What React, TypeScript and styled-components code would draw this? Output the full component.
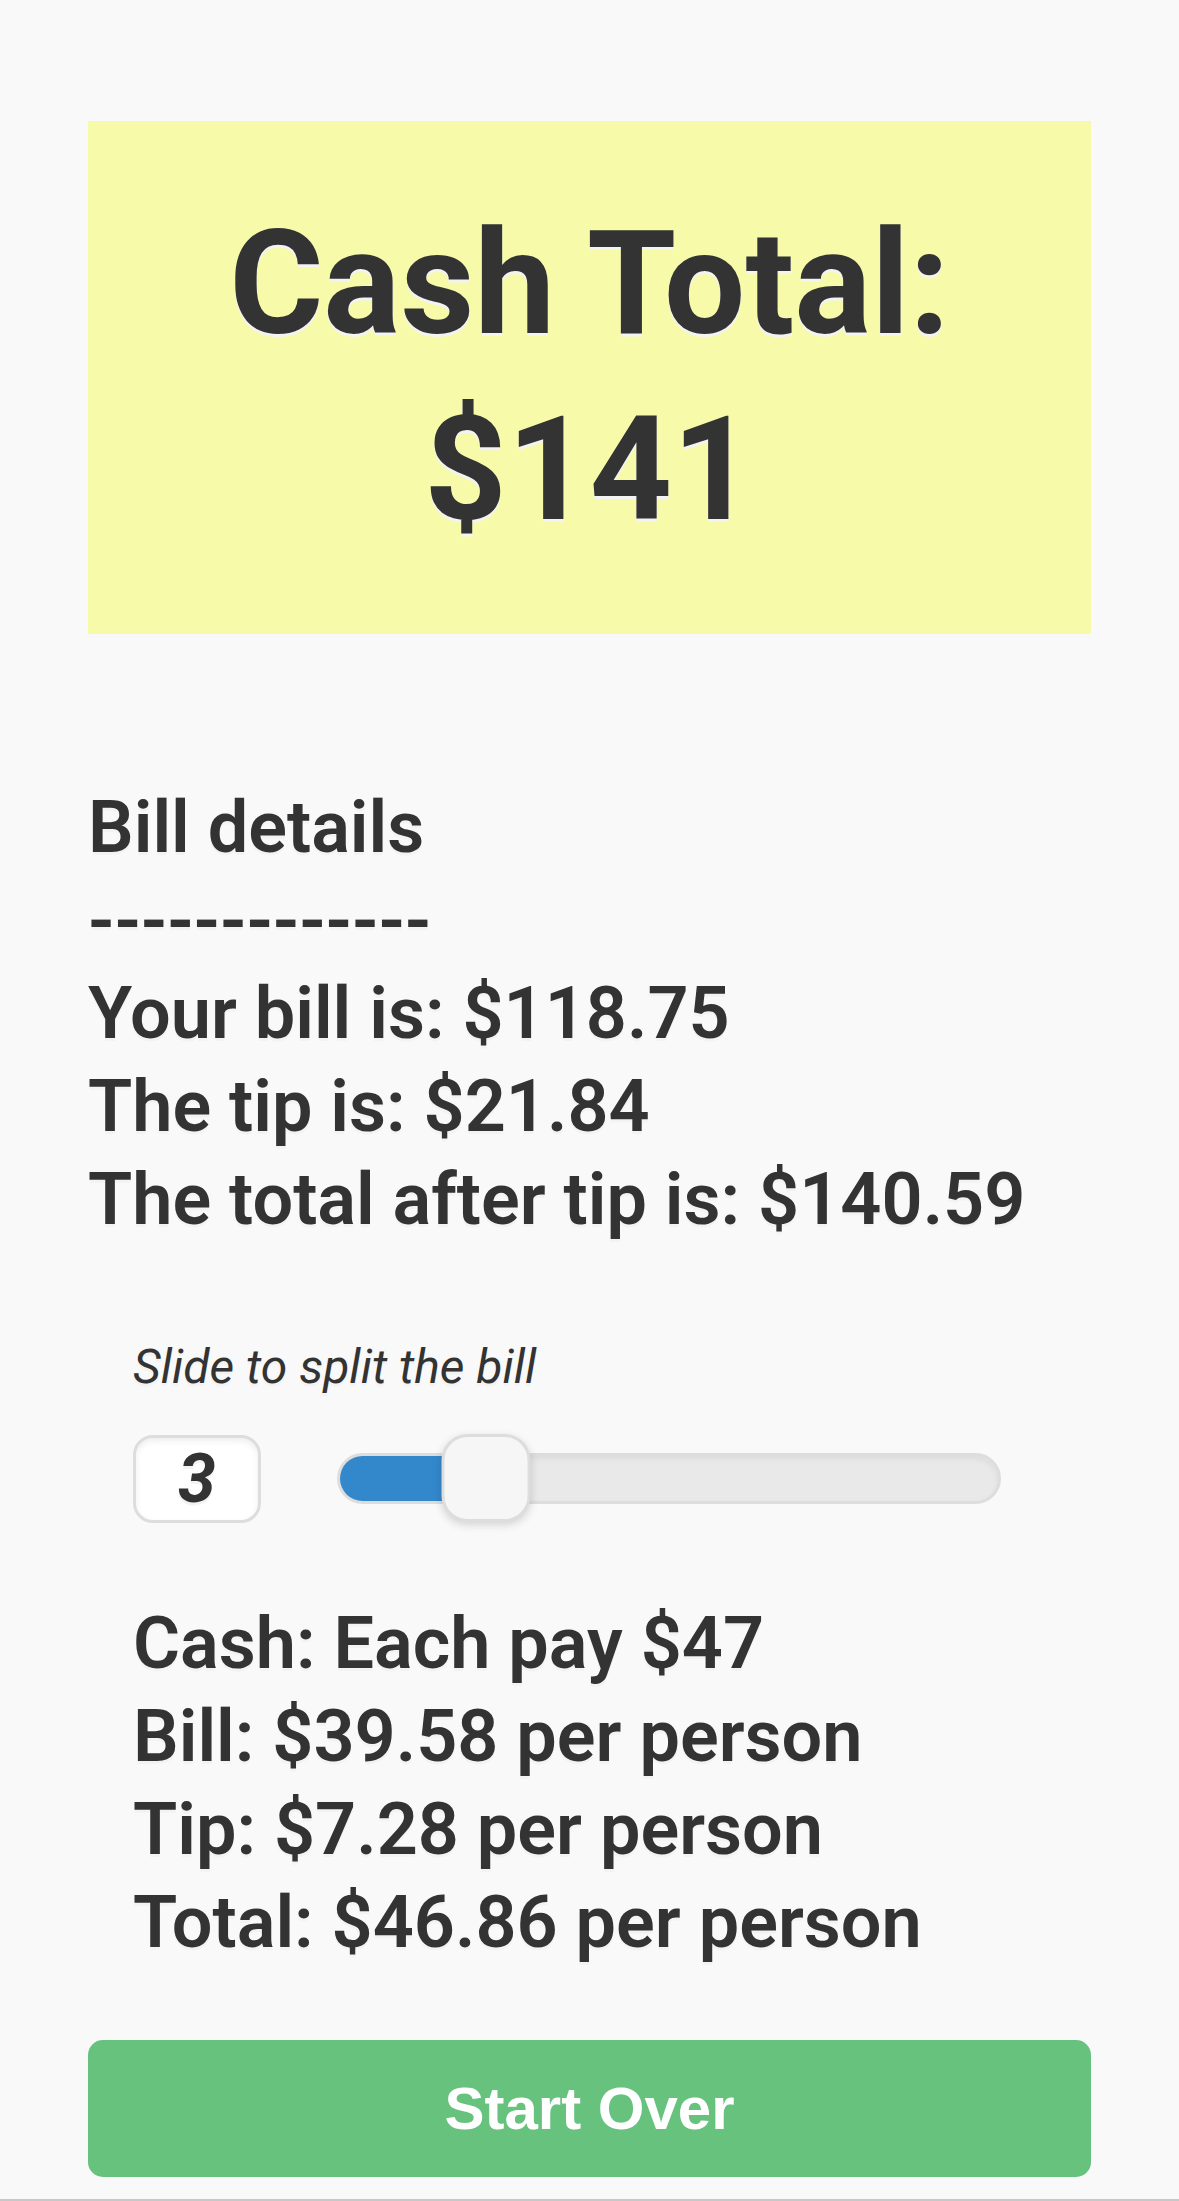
import React from "react";
import styled, { createGlobalStyle } from "styled-components";

const GlobalStyle = createGlobalStyle`
  html, body {
    margin: 0;
    padding: 0;
    background: #f9f9f9;
  }
  body {
    font-family: Roboto, "Noto Sans", "Liberation Sans", sans-serif;
    color: #333333;
  }
`;

const Page = styled.div`
  width: 1179px;
  min-height: 2201px;
  display: flex;
  flex-direction: column;
  overflow: hidden;
`;

const Content = styled.main`
  display: flex;
  flex-direction: column;
  padding: 121px 88px 0;
`;

const TotalBanner = styled.section`
  background: #f7faa9;
  padding: 70px 0 71px;
  text-align: center;
`;

const TotalTitle = styled.h1`
  margin: 0;
  font-size: 144px;
  line-height: 186px;
  font-weight: 700;
  text-shadow: 0 3px 0 #f3f3f3;
`;

const TextBlock = styled.div<{ $top: number; $indent?: number }>`
  margin-top: ${(p) => p.$top}px;
  padding-left: ${(p) => p.$indent ?? 0}px;
  font-size: 72px;
  line-height: 93px;
  font-weight: 600;
  text-shadow: 0 3px 0 #f3f3f3;
  white-space: nowrap;
`;

const Line = styled.div``;

const SplitSection = styled.section`
  margin-top: 90px;
  padding-left: 45px;
  display: flex;
  flex-direction: column;
`;

const SplitLabel = styled.div`
  font-size: 48px;
  line-height: 62px;
  font-style: italic;
  font-weight: 400;
  text-shadow: 0 3px 0 #f3f3f3;
`;

const SliderRow = styled.div`
  margin-top: 35px;
  height: 90px;
  display: flex;
  align-items: center;
  gap: 76px;
`;

const CountBox = styled.div`
  box-sizing: border-box;
  width: 128px;
  height: 88px;
  margin-top: 2px;
  border: 3px solid #dddddd;
  border-radius: 20px;
  background: #ffffff;
  box-shadow: inset 0 3px 6px rgba(0, 0, 0, 0.07);
  display: flex;
  align-items: center;
  justify-content: center;
  font-size: 68px;
  font-weight: 700;
  font-style: italic;
  text-shadow: 0 3px 0 #f3f3f3;
`;

const Track = styled.div`
  position: relative;
  box-sizing: border-box;
  width: 664px;
  height: 51px;
  border: 3px solid #dddddd;
  border-radius: 26px;
  background: #e9e9e9;
  box-shadow: inset 0 3px 6px rgba(0, 0, 0, 0.06);
`;

const Fill = styled.div`
  height: 100%;
  border-radius: 23px 0 0 23px;
  background: #3388cc;
`;

const Thumb = styled.div`
  position: absolute;
  top: 50%;
  box-sizing: border-box;
  width: 89px;
  height: 88px;
  transform: translate(-50%, -50%);
  border: 3px solid #dddddd;
  border-radius: 26px;
  background: #f6f6f6;
  box-shadow: 0 3px 9px rgba(0, 0, 0, 0.15);
`;

const StartOver = styled.button`
  margin-top: 71px;
  height: 137px;
  width: 100%;
  border: none;
  border-radius: 15px;
  background: #67c27e;
  color: #ffffff;
  font-family: "Liberation Sans", Arial, sans-serif;
  font-size: 60px;
  font-weight: 700;
  cursor: pointer;
`;

const BottomRule = styled.div`
  margin-top: 22px;
  height: 2px;
  width: 100%;
  background: #c8c8c8;
`;

const billLines = [
  "Bill details",
  "-------------",
  "Your bill is: $118.75",
  "The tip is: $21.84",
  "The total after tip is: $140.59",
];

const splitLines = [
  "Cash: Each pay $47",
  "Bill: $39.58 per person",
  "Tip: $7.28 per person",
  "Total: $46.86 per person",
];

export default function App() {
  const min = 1;
  const max = 10;
  const value = 3;
  const pct = ((value - min) / (max - min)) * 100;

  return (
    <>
      <GlobalStyle />
      <Page>
        <Content>
          <TotalBanner>
            <TotalTitle>
              Cash Total:
              <br />
              $141
            </TotalTitle>
          </TotalBanner>

          <TextBlock $top={147}>
            {billLines.map((l) => (
              <Line key={l}>{l}</Line>
            ))}
          </TextBlock>

          <SplitSection>
            <SplitLabel>Slide to split the bill</SplitLabel>
            <SliderRow>
              <CountBox>{value}</CountBox>
              <Track>
                <Fill style={{ width: `${pct}%` }} />
                <Thumb style={{ left: `${pct}%` }} />
              </Track>
            </SliderRow>
          </SplitSection>

          <TextBlock $top={74} $indent={45}>
            {splitLines.map((l) => (
              <Line key={l}>{l}</Line>
            ))}
          </TextBlock>

          <StartOver type="button">Start Over</StartOver>
        </Content>
        <BottomRule />
      </Page>
    </>
  );
}
